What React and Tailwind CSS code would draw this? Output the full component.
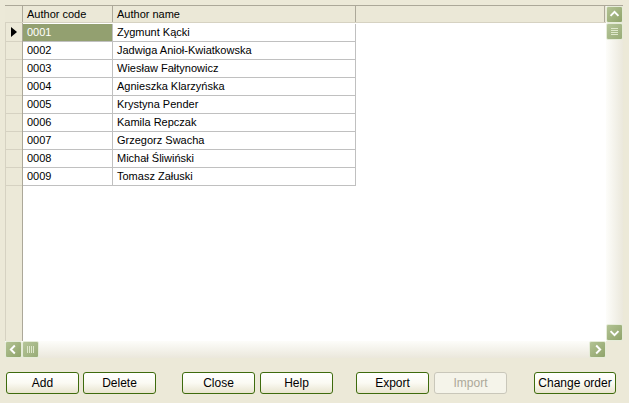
import React from 'react';

const rows = [
  ['0001', 'Zygmunt Kącki'],
  ['0002', 'Jadwiga Anioł-Kwiatkowska'],
  ['0003', 'Wiesław Fałtynowicz'],
  ['0004', 'Agnieszka Klarzyńska'],
  ['0005', 'Krystyna Pender'],
  ['0006', 'Kamila Repczak'],
  ['0007', 'Grzegorz Swacha'],
  ['0008', 'Michał Śliwiński'],
  ['0009', 'Tomasz Załuski'],
];

const Chevron = ({ dir }) => {
  const paths = {
    up: 'M4 10 L8.5 5.5 L13 10',
    down: 'M4 7 L8.5 11.5 L13 7',
    left: 'M10 4 L5.5 8.5 L10 13',
    right: 'M7 4 L11.5 8.5 L7 13',
  };
  return (
    <svg width="17" height="17" viewBox="0 0 17 17">
      <path d={paths[dir]} stroke="white" strokeWidth="2.2" fill="none" />
    </svg>
  );
};

const SbButton = ({ dir }) => (
  <div className="w-[17px] h-[17px] shrink-0 rounded-[2px] border border-[#e6ecd9] bg-gradient-to-br from-[#b3c394] to-[#8fa36a] flex items-center justify-center">
    <Chevron dir={dir} />
  </div>
);

const Thumb = ({ vertical }) => (
  <div className="w-[17px] h-[17px] shrink-0 rounded-[2px] border border-[#e6ecd9] bg-gradient-to-br from-[#b6c69a] to-[#98ab76] flex items-center justify-center">
    {vertical ? (
      <div className="flex flex-col gap-[1px]">
        <div className="w-[7px] h-px bg-[#dfe8cc]" />
        <div className="w-[7px] h-px bg-[#dfe8cc]" />
        <div className="w-[7px] h-px bg-[#dfe8cc]" />
        <div className="w-[7px] h-px bg-[#dfe8cc]" />
      </div>
    ) : (
      <div className="flex gap-[1px]">
        <div className="h-[7px] w-px bg-[#dfe8cc]" />
        <div className="h-[7px] w-px bg-[#dfe8cc]" />
        <div className="h-[7px] w-px bg-[#dfe8cc]" />
        <div className="h-[7px] w-px bg-[#dfe8cc]" />
      </div>
    )}
  </div>
);

const Btn = ({ label, disabled, w = 'w-[73px]', className = '' }) => (
  <button
    className={`${w} h-[22px] rounded-[3px] border text-[12px] leading-none ${
      disabled
        ? 'border-[#c9c7ba] bg-[#f5f4ea] text-[#aca899]'
        : 'border-[#3e6b0d] bg-gradient-to-b from-white via-[#fbfaf3] to-[#e8e4cf] text-black'
    } ${className}`}
  >
    {label}
  </button>
);

export default function App() {
  return (
    <div
      className="w-[629px] h-[403px] bg-[#ece9d8] relative overflow-hidden"
      style={{ fontFamily: '"Liberation Sans", Arial, sans-serif' }}
    >
      <div className="pt-[5px] pl-[5px] pr-[6px]">
        <div className="w-[618px] h-[353px] flex flex-col border-t border-[#aca899]">
          <div className="flex flex-1 min-h-0">
            {/* grid */}
            <div className="flex-1 bg-white flex flex-col text-[11px]">
              {/* header */}
              <div className="flex h-[17px] bg-[#ebe8d7] border-b border-[#d6d2c2] shrink-0">
                <div className="w-[18px] border-r border-[#aca899] shrink-0" />
                <div className="w-[90px] pl-[4px] border-r border-[#aca899] flex items-center">Author code</div>
                <div className="w-[243px] pl-[4px] border-r border-[#aca899] flex items-center">Author name</div>
                <div className="flex-1 border-r border-[#aca899] mr-[1px]" />
              </div>
              <div className="flex flex-1 min-h-0 pt-px">
                <div className="w-[18px] shrink-0 bg-[#ece9d8] border-r border-[#aca899] border-l border-l-[#d6d2c2] flex flex-col -mt-px">
                  {rows.map((r, i) => (
                    <div key={r[0]} className="h-[18px] border-b border-[#d6d2c2] flex items-center justify-center first:h-[19px]">
                      {i === 0 && (
                        <svg width="6" height="10" viewBox="0 0 6 10">
                          <path d="M0 0 L6 5 L0 10 Z" fill="black" />
                        </svg>
                      )}
                    </div>
                  ))}
                </div>
                <div className="flex flex-col">
                  {rows.map((r, i) => (
                    <div key={r[0]} className="flex h-[18px]">
                      <div
                        className={`w-[90px] pl-[4px] flex items-center border-r border-b border-[#c0c0c0] ${
                          i === 0 ? 'bg-[#93a070] text-white' : ''
                        }`}
                      >
                        {r[0]}
                      </div>
                      <div className="w-[243px] pl-[4px] flex items-center border-r border-b border-[#c0c0c0]">
                        {r[1]}
                      </div>
                    </div>
                  ))}
                </div>
              </div>
            </div>
            {/* vertical scrollbar */}
            <div className="w-[17px] shrink-0 flex flex-col bg-gradient-to-r from-[#fdfdfa] to-[#ebe8dc]">
              <SbButton dir="up" />
              <Thumb vertical />
              <div className="flex-1" />
              <SbButton dir="down" />
            </div>
          </div>
          {/* horizontal scrollbar */}
          <div className="h-[17px] flex shrink-0">
            <div className="flex-1 flex bg-gradient-to-b from-[#fdfdfa] to-[#ebe8dc]">
              <SbButton dir="left" />
              <Thumb />
              <div className="flex-1" />
              <SbButton dir="right" />
            </div>
            <div className="w-[17px] bg-[#ece9d8]" />
          </div>
        </div>
      </div>

      <div className="flex items-center mt-[14px] pl-[6px]">
        <Btn label="Add" />
        <Btn label="Delete" className="ml-[4px]" />
        <Btn label="Close" className="ml-[26px]" />
        <Btn label="Help" className="ml-[5px]" />
        <Btn label="Export" className="ml-[23px]" />
        <Btn label="Import" disabled className="ml-[5px]" />
        <Btn label="Change order" w="w-[82px]" className="ml-[27px]" />
      </div>
    </div>
  );
}
